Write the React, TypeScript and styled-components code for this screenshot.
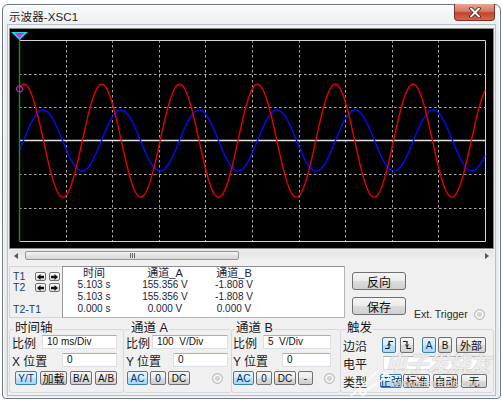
import React from 'react';
import styled, { createGlobalStyle, css } from 'styled-components';

const GlobalStyle = createGlobalStyle`
  html, body {
    margin: 0;
    padding: 0;
    background: #ffffff;
  }
  body {
    font-family: "Liberation Sans", "Noto Sans CJK SC", sans-serif;
    color: #1a1a1a;
  }
  * {
    box-sizing: border-box;
  }
`;

const Page = styled.div`
  width: 502px;
  height: 402px;
  padding: 4px 1px 0 2px;
  overflow: hidden;
`;

const Window = styled.div`
  position: relative;
  width: 499px;
  height: 395px;
  border: 1px solid #6d7784;
  border-radius: 6px 6px 4px 4px;
  background: linear-gradient(#f9fafb, #eceef1 22px, #e6e9ed);
  box-shadow: inset 0 0 0 1px rgba(255, 255, 255, 0.8);
  display: flex;
  flex-direction: column;
`;

const TitleBar = styled.div`
  height: 20px;
  display: flex;
  align-items: center;
  padding: 1px 5px 0 6px;
`;

const TitleText = styled.span`
  font-size: 11.5px;
  color: #1e1e1e;
  letter-spacing: 0.1px;
`;

const CloseButton = styled.div`
  margin-left: auto;
  align-self: flex-start;
  margin-top: -2px;
  width: 41px;
  height: 17px;
  border: 1px solid #7a3328;
  border-top: none;
  border-radius: 0 0 4px 4px;
  background: linear-gradient(#e9a597, #d47a66 45%, #c5432c 55%, #d8644a);
  display: flex;
  align-items: center;
  justify-content: center;
`;

const Client = styled.div`
  margin: 0 5px;
  height: 370px;
  background: #f0f0f0;
  box-shadow: 0 0 0 1px #b9c0c8;
  display: flex;
  flex-direction: column;
`;

const ScopeFrame = styled.div`
  margin: 3px 1px 0;
  height: 221px;
  border: 1px solid #8a8a8a;
  background: #000000;
`;

const ScrollBar = styled.div`
  margin: 1px 2px 0;
  height: 11px;
  display: flex;
  background: linear-gradient(#e4e4e4, #f1f1f1);
`;

const ScrollArrow = styled.div`
  width: 12px;
  display: flex;
  align-items: center;
  justify-content: center;
`;

const ScrollTrack = styled.div`
  flex: 1;
  display: flex;
  align-items: center;
`;

const ScrollThumb = styled.div`
  margin-left: 3px;
  width: 214px;
  height: 9px;
  border: 1px solid #979797;
  border-radius: 2px;
  background: linear-gradient(#f4f4f4, #e2e2e2 50%, #d6d6d6);
  display: flex;
  align-items: center;
  justify-content: center;
  gap: 1px;
`;

const Grip = styled.span`
  width: 1px;
  height: 5px;
  background: #666;
`;

const TopRow = styled.div`
  margin-top: 5px;
  height: 52px;
  padding-left: 1px;
  display: flex;
`;

const CursorBox = styled.div`
  width: 53px;
  height: 52px;
  border: 1px solid #d6d6d6;
  border-right: none;
  padding: 5px 0 0 3px;
  display: grid;
  grid-template-columns: 19px 11px 11px;
  grid-auto-rows: 9px;
  column-gap: 3px;
  row-gap: 2px;
  align-content: start;
`;

const CursorLabel = styled.span<{ $wide?: boolean }>`
  font-size: 10.5px;
  line-height: 9px;
  color: #1f3a6e;
  white-space: nowrap;
  ${(p) =>
    p.$wide &&
    css`
      grid-column: 1 / span 3;
      margin-top: 11px;
    `}
`;

const StepButton = styled.div`
  border: 1px solid #707070;
  border-radius: 2px;
  background: linear-gradient(#fbfbfb, #dcdcdc);
  display: flex;
  align-items: center;
  justify-content: center;
`;

const Readout = styled.div`
  width: 283px;
  height: 52px;
  background: #ffffff;
  border: 1px solid #b4b4b4;
  border-top-color: #8e8e8e;
  border-left-color: #9a9a9a;
  display: grid;
  grid-template-columns: 62px 80px 58px;
  grid-auto-rows: 12px;
  align-content: start;
`;

const ReadCell = styled.span<{ $head?: boolean }>`
  text-align: center;
  white-space: nowrap;
  color: #22223a;
  font-size: ${(p) => (p.$head ? '11px' : '10px')};
  line-height: 12px;
`;

const SideButtons = styled.div`
  margin-left: 7px;
  width: 54px;
  padding-top: 6px;
  display: flex;
  flex-direction: column;
  gap: 7px;
`;

const PushButton = styled.div`
  height: 18px;
  border: 1px solid #707070;
  border-radius: 3px;
  background: linear-gradient(#f4f4f4, #ebebeb 50%, #dddddd 50%, #cfcfcf);
  font-size: 12px;
  display: flex;
  align-items: center;
  justify-content: center;
  color: #111;
`;

const ExtTrigger = styled.div`
  margin-left: 8px;
  align-self: flex-end;
  margin-bottom: -3px;
  height: 14px;
  display: flex;
  align-items: center;
  font-size: 10.5px;
  color: #2a2a2a;
`;

const Radio = styled.span<{ $ml?: number }>`
  display: inline-block;
  flex: none;
  width: 11px;
  height: 11px;
  margin-left: ${(p) => p.$ml ?? 0}px;
  border-radius: 50%;
  border: 1px solid #b5b5b5;
  background: radial-gradient(circle, #d2d2d2 0 2px, #f6f6f6 3px, #e2e2e2 5px);
`;

const GroupsRow = styled.div`
  margin-top: 11px;
  padding-left: 1px;
  display: flex;
`;

const Group = styled.div<{ $w: number; $pl: number; $pr: number; $first?: boolean }>`
  width: ${(p) => p.$w}px;
  margin-left: ${(p) => (p.$first ? 0 : -1)}px;
  height: 64px;
  border: 1px solid #d3d9df;
  border-radius: 3px;
  padding: 0 ${(p) => p.$pr}px 0 ${(p) => p.$pl}px;
  display: flex;
  flex-direction: column;
`;

const GroupTitle = styled.span<{ $indent: number }>`
  align-self: flex-start;
  margin: -9px 0 0 ${(p) => p.$indent}px;
  padding: 0 1px;
  height: 14px;
  line-height: 14px;
  font-size: 12.5px;
  background: #f0f0f0;
  color: #1a1a1a;
`;

const FieldRow = styled.div<{ $mt: number; $h?: number; $pl?: number }>`
  margin-top: ${(p) => p.$mt}px;
  height: ${(p) => p.$h ?? 14}px;
  padding-left: ${(p) => p.$pl ?? 0}px;
  display: flex;
  align-items: center;
`;

const FieldLabel = styled.span<{ $w: number }>`
  width: ${(p) => p.$w}px;
  flex: none;
  font-size: 12px;
  white-space: nowrap;
  color: #1a1a1a;
`;

const Field = styled.div`
  flex: 1;
  height: 14px;
  background: #ffffff;
  border: 1px solid #dbdfe6;
  border-top-color: #abadb3;
  font-size: 10px;
  line-height: 12px;
  padding-left: 4px;
  color: #111;
  white-space: nowrap;
`;

const ToolButton = styled.div<{ $w: number; $ml?: number; $active?: boolean }>`
  width: ${(p) => p.$w}px;
  margin-left: ${(p) => p.$ml ?? 0}px;
  height: 100%;
  flex: none;
  border: 1px solid #707070;
  border-radius: 2px;
  background: linear-gradient(#f4f4f4, #ebebeb 50%, #dddddd 50%, #cfcfcf);
  font-size: 10px;
  color: #111;
  display: flex;
  align-items: center;
  justify-content: center;
  white-space: nowrap;
  ${(p) =>
    p.$active &&
    css`
      border-color: #3c7fb1;
      background: linear-gradient(#e5f4fc, #d4ecfa 50%, #bde2f8 50%, #a9d8f4);
      color: #10306a;
    `}
`;

const CjkText = styled.span`
  font-size: 11px;
`;

const Watermark = styled.div`
  position: absolute;
  left: 346px;
  top: 347px;
  width: 150px;
  height: 46px;
  pointer-events: none;
  display: flex;
  align-items: flex-start;
`;

const MarkText = styled.div`
  margin-left: 36px;
  display: flex;
  flex-direction: column;
  align-items: flex-start;
`;

const MarkTitle = styled.span`
  font-size: 22px;
  font-weight: 700;
  font-style: italic;
  line-height: 25px;
  color: rgba(255, 255, 255, 0.82);
  text-shadow: 0 0 1px rgba(90, 90, 90, 0.6);
  letter-spacing: -1px;
`;

const MarkUrl = styled.span`
  margin-left: 6px;
  font-size: 11px;
  line-height: 12px;
  color: rgba(255, 255, 255, 0.8);
  text-shadow: 0 0 1px rgba(90, 90, 90, 0.5);
`;

const X0 = 9;
const X1 = 475;
const Y0 = 11;
const Y1 = 212;

function wave(center: number, amp: number, peak: number, period: number) {
  let d = '';
  for (let x = X0; x <= X1; x += 1) {
    const y = center - amp * Math.cos((2 * Math.PI * (x - peak)) / period);
    d += (x === X0 ? 'M' : 'L') + x + ' ' + y.toFixed(2) + ' ';
  }
  return d;
}

const vLines = [1, 2, 3, 4, 5, 6, 7, 8, 9].map((k) => Math.round(X0 + k * 46.6) + 0.5);
const hLines = [1, 2, 4, 5].map((k) => Math.round(Y0 + k * 33.5) + 0.5);

function Screen() {
  return (
    <svg width="483" height="219" style={{ display: 'block' }}>
      {vLines.map((x) => (
        <line key={'v' + x} x1={x} y1={Y0} x2={x} y2={Y1} stroke="#a9a9a9" strokeDasharray="2.5 2.5" />
      ))}
      {hLines.map((y) => (
        <line key={'h' + y} x1={X0} y1={y} x2={X1} y2={y} stroke="#a9a9a9" strokeDasharray="2.5 2.5" />
      ))}
      <line x1={X0} y1={111.5} x2={X1} y2={111.5} stroke="#e2e2e2" strokeWidth="1.4" />
      <polyline points={`${X0},${Y0 + 0.5} ${X1 + 0.5},${Y0 + 0.5} ${X1 + 0.5},${Y1 + 0.5} ${X0},${Y1 + 0.5}`} fill="none" stroke="#d6d6d6" />
      <path d={wave(111.5, 30.5, 33, 78)} fill="none" stroke="#0a0aff" strokeWidth="1.4" />
      <path d={wave(111.6, 56.5, 14, 77.8)} fill="none" stroke="#e60000" strokeWidth="1.4" />
      <line x1={9.5} y1={4} x2={9.5} y2={Y1 + 1} stroke="#00a000" strokeWidth="1.4" />
      <polygon points="1,3 18,3 9.5,11" fill="#22d8e8" />
      <polygon points="5,4 14,4 9.5,9" fill="#e020e0" />
      <circle cx={9.5} cy={60} r={3} fill="none" stroke="#c020c0" strokeWidth="1.2" />
    </svg>
  );
}

function Arrow({ dir }: { dir: 'left' | 'right' }) {
  const pts = dir === 'left' ? '0,3 3.5,0 3.5,1.8 7,1.8 7,4.2 3.5,4.2 3.5,6' : '7,3 3.5,0 3.5,1.8 0,1.8 0,4.2 3.5,4.2 3.5,6';
  return (
    <svg width="7" height="6">
      <polygon points={pts} fill="#111" />
    </svg>
  );
}

function EdgeIcon({ rising }: { rising: boolean }) {
  return (
    <svg width="10" height="10">
      <path d={rising ? 'M1 8.5 H5 V1.5 H9' : 'M1 1.5 H5 V8.5 H9'} fill="none" stroke="#111" strokeWidth="1.1" />
      <path d={rising ? 'M3.3 5.5 L5 3.6 L6.7 5.5' : 'M3.3 4.5 L5 6.4 L6.7 4.5'} fill="none" stroke="#111" strokeWidth="1" />
    </svg>
  );
}

export default function App() {
  return (
    <Page>
      <GlobalStyle />
      <Window>
        <TitleBar>
          <TitleText>示波器-XSC1</TitleText>
          <CloseButton>
            <svg width="14" height="11">
              <path d="M3 1.5 L11 9.5 M11 1.5 L3 9.5" stroke="#4a1c16" strokeWidth="3.6" strokeLinecap="round" />
              <path d="M3 1.5 L11 9.5 M11 1.5 L3 9.5" stroke="#ffffff" strokeWidth="2" strokeLinecap="round" />
            </svg>
          </CloseButton>
        </TitleBar>

        <Client>
          <ScopeFrame>
            <Screen />
          </ScopeFrame>

          <ScrollBar>
            <ScrollArrow>
              <svg width="4" height="6">
                <polygon points="4,0 0,3 4,6" fill="#555" />
              </svg>
            </ScrollArrow>
            <ScrollTrack>
              <ScrollThumb>
                <Grip />
                <Grip />
                <Grip />
              </ScrollThumb>
            </ScrollTrack>
            <ScrollArrow>
              <svg width="4" height="6">
                <polygon points="0,0 4,3 0,6" fill="#555" />
              </svg>
            </ScrollArrow>
          </ScrollBar>

          <TopRow>
            <CursorBox>
              <CursorLabel>T1</CursorLabel>
              <StepButton>
                <Arrow dir="left" />
              </StepButton>
              <StepButton>
                <Arrow dir="right" />
              </StepButton>
              <CursorLabel>T2</CursorLabel>
              <StepButton>
                <Arrow dir="left" />
              </StepButton>
              <StepButton>
                <Arrow dir="right" />
              </StepButton>
              <CursorLabel $wide>T2-T1</CursorLabel>
            </CursorBox>

            <Readout>
              <ReadCell $head>时间</ReadCell>
              <ReadCell $head>通道_A</ReadCell>
              <ReadCell $head>通道_B</ReadCell>
              <ReadCell>5.103 s</ReadCell>
              <ReadCell>155.356 V</ReadCell>
              <ReadCell>-1.808 V</ReadCell>
              <ReadCell>5.103 s</ReadCell>
              <ReadCell>155.356 V</ReadCell>
              <ReadCell>-1.808 V</ReadCell>
              <ReadCell>0.000 s</ReadCell>
              <ReadCell>0.000 V</ReadCell>
              <ReadCell>0.000 V</ReadCell>
            </Readout>

            <SideButtons>
              <PushButton>反向</PushButton>
              <PushButton>保存</PushButton>
            </SideButtons>

            <ExtTrigger>
              Ext. Trigger
              <Radio $ml={6} />
            </ExtTrigger>
          </TopRow>

          <GroupsRow>
            <Group $w={115} $pl={2} $pr={6} $first>
              <GroupTitle $indent={2}>时间轴</GroupTitle>
              <FieldRow $mt={0}>
                <FieldLabel $w={30}>比例</FieldLabel>
                <Field>10 ms/Div</Field>
              </FieldRow>
              <FieldRow $mt={4}>
                <FieldLabel $w={50}>X 位置</FieldLabel>
                <Field>0</Field>
              </FieldRow>
              <FieldRow $mt={4} $pl={3}>
                <ToolButton $w={22} $active>Y/T</ToolButton>
                <ToolButton $w={27} $ml={3}>
                  <CjkText>加载</CjkText>
                </ToolButton>
                <ToolButton $w={22} $ml={3}>B/A</ToolButton>
                <ToolButton $w={22} $ml={3}>A/B</ToolButton>
              </FieldRow>
            </Group>

            <Group $w={109} $pl={2} $pr={3}>
              <GroupTitle $indent={4}>通道 A</GroupTitle>
              <FieldRow $mt={0}>
                <FieldLabel $w={26}>比例</FieldLabel>
                <Field>100&nbsp; V/Div</Field>
              </FieldRow>
              <FieldRow $mt={4}>
                <FieldLabel $w={47}>Y 位置</FieldLabel>
                <Field>0</Field>
              </FieldRow>
              <FieldRow $mt={4} $pl={1}>
                <ToolButton $w={21} $active>AC</ToolButton>
                <ToolButton $w={16} $ml={2}>0</ToolButton>
                <ToolButton $w={22} $ml={2}>DC</ToolButton>
                <Radio $ml={22} />
              </FieldRow>
            </Group>

            <Group $w={110} $pl={1} $pr={9}>
              <GroupTitle $indent={2}>通道 B</GroupTitle>
              <FieldRow $mt={0}>
                <FieldLabel $w={30}>比例</FieldLabel>
                <Field>5&nbsp; V/Div</Field>
              </FieldRow>
              <FieldRow $mt={4}>
                <FieldLabel $w={49}>Y 位置</FieldLabel>
                <Field>0</Field>
              </FieldRow>
              <FieldRow $mt={4}>
                <ToolButton $w={21} $active>AC</ToolButton>
                <ToolButton $w={16} $ml={2}>0</ToolButton>
                <ToolButton $w={22} $ml={2}>DC</ToolButton>
                <ToolButton $w={15} $ml={2}>-</ToolButton>
                <Radio $ml={11} />
              </FieldRow>
            </Group>

            <Group $w={154} $pl={2} $pr={7}>
              <GroupTitle $indent={3}>触发</GroupTitle>
              <FieldRow $mt={2} $h={16}>
                <FieldLabel $w={39}>边沿</FieldLabel>
                <ToolButton $w={14} $active>
                  <EdgeIcon rising />
                </ToolButton>
                <ToolButton $w={14} $ml={4}>
                  <EdgeIcon rising={false} />
                </ToolButton>
                <ToolButton $w={14} $ml={8} $active>
                  A
                </ToolButton>
                <ToolButton $w={14} $ml={2}>
                  B
                </ToolButton>
                <ToolButton $w={30} $ml={4}>
                  <CjkText>外部</CjkText>
                </ToolButton>
              </FieldRow>
              <FieldRow $mt={3}>
                <FieldLabel $w={40}>电平</FieldLabel>
                <Field />
              </FieldRow>
              <FieldRow $mt={4}>
                <FieldLabel $w={37}>类型</FieldLabel>
                <ToolButton $w={22} $active>
                  <CjkText>正弦</CjkText>
                </ToolButton>
                <ToolButton $w={27} $ml={1}>
                  <CjkText>标准</CjkText>
                </ToolButton>
                <ToolButton $w={25} $ml={3}>
                  <CjkText>自动</CjkText>
                </ToolButton>
                <ToolButton $w={26} $ml={3}>
                  <CjkText>无</CjkText>
                </ToolButton>
              </FieldRow>
            </Group>
          </GroupsRow>
        </Client>

        <Watermark>
          <svg width="40" height="44" style={{ position: 'absolute', left: 0, top: 4 }}>
            <path d="M2 40 L30 14 M14 36 L36 22" stroke="rgba(255,255,255,0.85)" strokeWidth="1.6" fill="none" />
            <circle cx="14" cy="36" r="3" fill="none" stroke="rgba(255,255,255,0.9)" strokeWidth="1.4" />
            <circle cx="37" cy="21" r="3" fill="none" stroke="rgba(255,255,255,0.9)" strokeWidth="1.4" />
          </svg>
          <MarkText>
            <MarkTitle>电子发烧友</MarkTitle>
            <MarkUrl>www.elecfans.com</MarkUrl>
          </MarkText>
        </Watermark>
      </Window>
    </Page>
  );
}
